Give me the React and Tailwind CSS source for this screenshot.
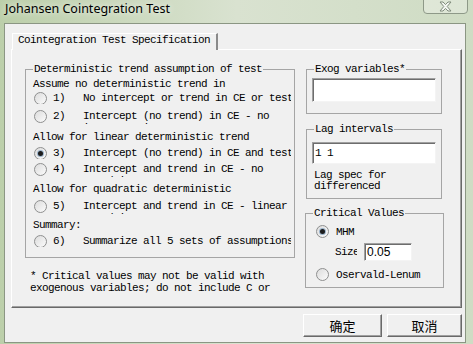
const mono = "font-['Liberation_Mono',monospace] text-[11px] tracking-[-0.6px] leading-[12px] text-black";

/* ================= SMALL PARTS ================= */

const Radio = ({ checked }) => (
  <span className="w-[13px] h-[13px] shrink-0 rounded-full border border-[#8e8f8f] bg-gradient-to-br from-[#dcdcdc] to-[#fbfbfb] flex items-center justify-center">
    {checked && <span className="w-[5px] h-[5px] rounded-full bg-[#1c1c1c] shadow-[0_0_0_1px_#9bb4cc]" />}
  </span>
);

const Option = ({ num, text, checked, wrap }) => (
  <div className={`flex items-start ${wrap ? "h-[14px]" : "h-[12px]"} overflow-hidden`}>
    <span className="ml-[1px] -mt-[0.5px]">
      <Radio checked={checked} />
    </span>
    <span className="ml-[6px] w-[30px] shrink-0">{num}</span>
    <span className={`w-[208px] shrink-0 overflow-hidden ${wrap ? "" : "whitespace-nowrap"}`}>
      {text}
    </span>
  </div>
);

const Group = ({ title, className, children }) => (
  <fieldset className={`border border-[#a5a5a5] ${className}`}>
    <legend className="ml-[7px] px-[1px] leading-[12px]">{title}</legend>
    {children}
  </fieldset>
);

const Field = ({ className, children }) => (
  <div className={`bg-white border border-t-[#a0a0a0] border-l-[#a0a0a0] border-b-[#f4f4f4] border-r-[#f4f4f4] shadow-[inset_1px_1px_0_#6d6d6d] ${className}`}>
    {children}
  </div>
);

const Button = ({ label, className }) => (
  <button className={`h-[23px] bg-[#f0f0f0] border border-t-white border-l-white border-r-[#696969] border-b-[#696969] shadow-[inset_-1px_-1px_0_#a0a0a0] font-['Noto_Sans_CJK_SC',sans-serif] text-[13px] text-black leading-none ${className}`}>
    {label}
  </button>
);

/* ================= PAGE ================= */

export default function App() {
  return (
    <div className="w-[473px] h-[344px] overflow-hidden flex flex-col bg-gradient-to-r from-[#bccfaa] via-[#d9e2d0] to-[#cfdcc4]">
      {/* TITLE BAR */}
      <div className="h-[23px] flex items-start shrink-0">
        <span className="pl-[5px] pt-[1px] font-['Noto_Sans',sans-serif] text-[12.5px] leading-[16px] text-black [text-shadow:0_0_6px_#ffffff]">
          Johansen Cointegration Test
        </span>
        <div className="ml-auto mr-[5px] -mt-[1px] w-[45px] h-[15px] rounded-b-[4px] border border-[#8e9988] bg-white/30 flex items-center justify-center">
          <svg width="13" height="11" viewBox="0 0 13 11">
            <path
              d="M1 1 H4 L6.5 3.6 L9 1 H12 L8.2 5.5 L12 10 H9 L6.5 7.4 L4 10 H1 L4.8 5.5 Z"
              fill="#f6f8f4"
              stroke="#7f8b7b"
              strokeWidth="1"
              strokeLinejoin="round"
            />
          </svg>
        </div>
      </div>

      {/* CLIENT */}
      <div className="ml-[4px] w-[462px] h-[320px] bg-[#f0f0f0] border border-[#8b9683]">
        {/* TAB HEADER */}
        <div className={`relative z-10 ml-[7px] mt-[9px] w-[206px] h-[17px] bg-[#f0f0f0] border-l border-t border-white border-r-2 border-r-[#8a8a8a] pl-[5px] ${mono}`}>
          Cointegration Test Specification
        </div>

        {/* TAB BODY */}
        <div className={`-mt-[1px] ml-[6px] w-[451px] h-[259px] border border-t-white border-l-white border-r-[#696969] border-b-[#696969] shadow-[inset_-1px_-1px_0_#a0a0a0] flex items-start ${mono}`}>
          {/* LEFT */}
          <div className="ml-[13px] mt-[13px] w-[270px] shrink-0">
            <Group title="Deterministic trend assumption of test" className="pb-[10px]">
              <div className="pl-[7px]">
                <div className="mt-[3px]">Assume no deterministic trend in</div>
                <div className="mt-[2px]">
                  <Option num="1)" text="No intercept or trend in CE or test VAR" />
                </div>
                <div className="mt-[6px]">
                  <Option num="2)" text="Intercept (no trend) in CE - no intercept in VAR" wrap />
                </div>
                <div className="mt-[7px]">Allow for linear deterministic trend</div>
                <div className="mt-[4px]">
                  <Option num="3)" text="Intercept (no trend) in CE and test VAR" checked />
                </div>
                <div className="mt-[4px]">
                  <Option num="4)" text="Intercept and trend in CE - no trend in VAR" wrap />
                </div>
                <div className="mt-[6px] whitespace-nowrap">Allow for quadratic deterministic</div>
                <div className="mt-[5px]">
                  <Option num="5)" text="Intercept and trend in CE - linear trend in VAR" wrap />
                </div>
                <div className="mt-[5px]">Summary:</div>
                <div className="mt-[4px]">
                  <Option num="6)" text="Summarize all 5 sets of assumptions" />
                </div>
              </div>
            </Group>

            <div className="ml-[5px] mt-[12px]">
              * Critical values may not be valid with
              <br />
              exogenous variables; do not include C or
            </div>
          </div>

          {/* RIGHT */}
          <div className="ml-[10px] mt-[13px] w-[139px] shrink-0">
            <Group title="Exog variables*" className="ml-[1px] w-[136px] pb-[11px]">
              <Field className="mt-[3px] ml-[5px] w-[124px] h-[24px]" />
            </Group>

            <Group title="Lag intervals" className="ml-[1px] mt-[9px] w-[136px] pb-[6px]">
              <Field className="mt-[7px] ml-[5px] w-[124px] h-[22px] pl-[2px] pt-[4px]">1 1</Field>
              <div className="mt-[6px] ml-[7px] leading-[11px]">
                Lag spec for
                <br />
                differenced
              </div>
            </Group>

            <Group title="Critical Values" className="mt-[8px] w-[139px] pb-[6px]">
              <div className="mt-[6px] ml-[10px] flex items-center h-[13px]">
                <Radio checked />
                <span className="ml-[7px]">MHM</span>
              </div>
              <div className="mt-[5px] ml-[29px] flex items-center h-[18px]">
                <span className="w-[22px] overflow-hidden whitespace-nowrap">Size</span>
                <Field className="ml-[7px] w-[48px] h-[18px] pl-[2px] font-['Liberation_Sans',sans-serif] text-[12px] tracking-normal leading-[16px]">
                  0.05
                </Field>
              </div>
              <div className="mt-[7px] ml-[10px] flex items-center h-[13px]">
                <Radio />
                <span className="ml-[7px]">Oservald-Lenum</span>
              </div>
            </Group>
          </div>
        </div>

        {/* BUTTONS */}
        <div className="mt-[6px] ml-[298px] flex gap-[5px]">
          <Button label="确定" className="w-[79px]" />
          <Button label="取消" className="w-[75px]" />
        </div>
      </div>
    </div>
  );
}
